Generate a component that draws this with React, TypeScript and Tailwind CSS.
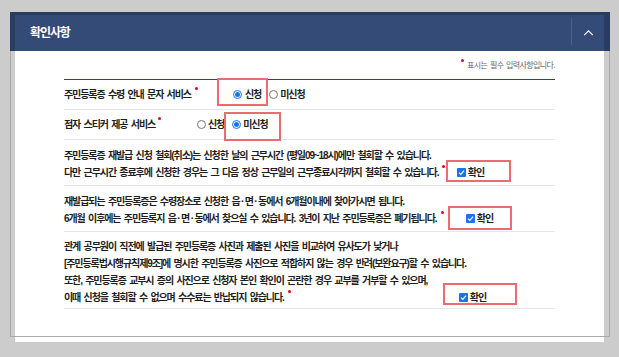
import * as React from "react"

const Dot = ({ className = "" }: { className?: string }) => (
  <span className={"inline-block h-[3px] w-[3px] rounded-full bg-[#e60012] " + className} />
)

const Mid = () => <span className="mx-[1.5px]">·</span>

const Radio = ({ checked }: { checked?: boolean }) =>
  checked ? (
    <span className="flex h-[9px] w-[9px] items-center justify-center rounded-full border border-[#1a73e8] bg-white">
      <span className="h-[5px] w-[5px] rounded-full bg-[#1a73e8]" />
    </span>
  ) : (
    <span className="h-[9px] w-[9px] rounded-full border border-[#767676] bg-white" />
  )

const Check = () => (
  <span className="flex h-[9px] w-[9px] items-center justify-center rounded-[1px] bg-[#1a73e8]">
    <svg viewBox="0 0 10 10" className="h-[7px] w-[7px]" fill="none">
      <path d="M1.5 5.2 L4 7.6 L8.6 2.4" stroke="white" strokeWidth="1.6" />
    </svg>
  </span>
)

// red annotation box drawn round a control
const Mark = ({ className }: { className: string }) => (
  <span className={"pointer-events-none absolute border-2 border-[#eb6b73] " + className} />
)

const Confirm = ({ mark, className }: { mark: string; className: string }) => (
  <span className={"relative ml-auto flex items-center gap-[2px] " + className}>
    <Check />
    <span>확인</span>
    <Mark className={mark} />
  </span>
)

export default function App() {
  return (
    <div className="h-[357px] w-[619px] bg-[#cccccc] pl-[10px] pt-[12px] font-['Liberation_Sans','Noto_Sans_CJK_KR',sans-serif]">
      <div className="relative w-[600px]">
        {/* header */}
        <div className="relative z-10 h-[39px] bg-[#2a3c61] pl-[5px] pr-[6px] pt-[3px]">
          <div className="flex h-[36px] items-center bg-[#344b78] pl-[15px]">
            <span className="text-[12px] font-bold tracking-[-1.1px] text-white">확인사항</span>
            <div className="ml-auto mb-[3px] h-[27px] w-px bg-[#4b6090]" />
            <div className="flex w-[32px] justify-center">
              <svg viewBox="0 0 12 7" className="h-[6px] w-[11px]" fill="none">
                <path d="M1 6 L6 1 L11 6" stroke="white" strokeWidth="1.3" />
              </svg>
            </div>
          </div>
        </div>

        {/* body */}
        <div className="ml-[5px] mr-[6px] h-[291px] bg-white px-[49px] text-[10px] font-bold leading-[17px] tracking-[-1.1px] text-[#1e1e1e] [word-spacing:1.7px]">
          <div className="flex h-[28px] items-center justify-end text-[8px] font-normal tracking-[-0.6px] text-[#666] [word-spacing:1px]">
            <Dot className="-mt-[10px] mr-[3px]" />
            <span>표시는 필수 입력사항입니다.</span>
          </div>

          <div className="border-t border-[#2e4572]">
            <div className="flex h-[30px] items-center border-b border-[#e6e6e6]">
              <div className="flex w-[169px] items-center">
                <span>주민등록증 수령 안내 문자 서비스</span>
                <Dot className="-mt-[12px] ml-[4px]" />
              </div>
              <span className="relative flex items-center gap-[3px]">
                <Radio checked />
                <span>신청</span>
                <Mark className="-bottom-[3px] -left-[16px] -right-[7px] -top-[8px]" />
              </span>
              <span className="ml-[8px] flex items-center gap-[2px]">
                <Radio />
                <span>미신청</span>
              </span>
            </div>

            <div className="flex h-[30px] items-center border-b border-[#e6e6e6]">
              <div className="flex w-[133px] items-center">
                <span>점자 스티커 제공 서비스</span>
                <Dot className="-mt-[12px] ml-[3px]" />
              </div>
              <span className="flex items-center gap-[2px]">
                <Radio />
                <span>신청</span>
              </span>
              <span className="relative ml-[8px] flex items-center gap-[2px]">
                <Radio checked />
                <span>미신청</span>
                <Mark className="-bottom-[8px] -left-[8px] -right-[13px] -top-[4px]" />
              </span>
            </div>

            <div className="h-[46px] border-b border-[#e6e6e6] pt-[7px]">
              <p>주민등록증 재발급 신청 철회(취소)는 신청한 날의 근무시간 (평일09~18시)에만 철회할 수 있습니다.</p>
              <div className="flex items-center">
                <span>다만 근무시간 종료후에 신청한 경우는 그 다음 정상 근무일의 근무종료시각까지 철회할 수 있습니다.</span>
                <Dot className="-mt-[12px] ml-[4px]" />
                <Confirm className="mr-[71px]" mark="-bottom-[1px] -left-[11px] -right-[27px] -top-[4px]" />
              </div>
            </div>

            <div className="h-[46px] border-b border-[#e6e6e6] pt-[7px]">
              <p>
                재발급되는 주민등록증은 수령장소로 신청한 읍<Mid />면<Mid />동에서 6개월이내에 찾아가시면 됩니다.
              </p>
              <div className="flex items-center">
                <span>
                  6개월 이후에는 주민등록지 읍<Mid />면<Mid />동에서 찾으실 수 있습니다. 3년이 지난 주민등록증은 폐기됩니다.
                </span>
                <Dot className="-mt-[12px] ml-[5px]" />
                <Confirm className="mr-[62px]" mark="-bottom-[3px] -left-[18px] -right-[19px] -top-[4px]" />
              </div>
            </div>

            <div className="h-[77px] border-b border-[#e6e6e6] pt-[6px]">
              <p>관계 공무원이 직전에 발급된 주민등록증 사진과 제출된 사진을 비교하여 유사도가 낮거나</p>
              <p>[주민등록법시행규칙제9조]에 명시한 주민등록증 사진으로 적합하지 않는 경우 반려(보완요구)할 수 있습니다.</p>
              <p>또한, 주민등록증 교부시 증의 사진으로 신청자 본인 확인이 곤란한 경우 교부를 거부할 수 있으며,</p>
              <div className="flex items-center">
                <span>이때 신청을 철회할 수 없으며 수수료는 반납되지 않습니다.</span>
                <Dot className="-mt-[12px] ml-[4px]" />
                <Confirm className="mr-[69px]" mark="bottom-[1px] -left-[16px] -right-[31px] -top-[6px]" />
              </div>
            </div>
          </div>
        </div>

        {/* outline */}
        <div className="pointer-events-none absolute left-0 top-0 h-[325px] w-[600px] border border-[#a9a9a9]" />
      </div>
    </div>
  )
}
